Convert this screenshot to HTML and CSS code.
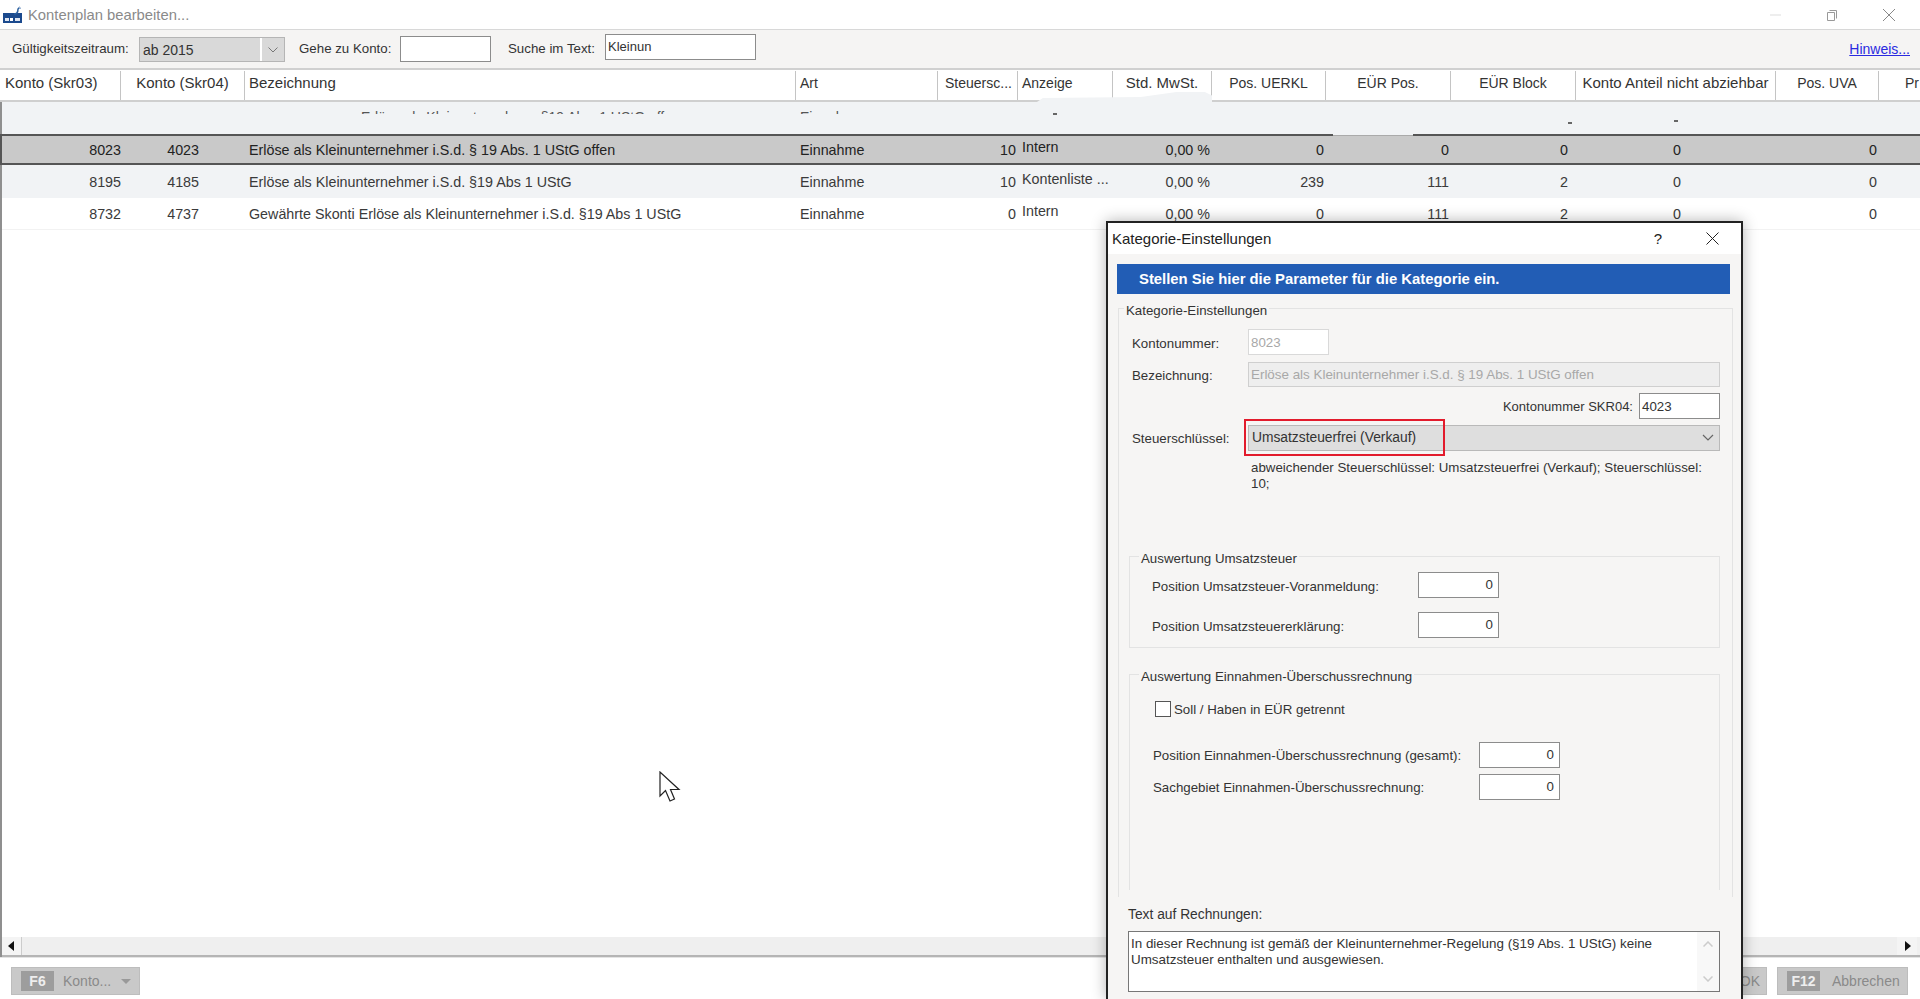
FILE: index.html
```html
<!DOCTYPE html>
<html lang="de">
<head>
  <meta charset="UTF-8">
  <title>Kontenplan bearbeiten...</title>
  <link rel="stylesheet" href="styles.css">
</head>
<body>

<div class="window">

  <!-- Titelleiste -->
  <div class="titlebar">
    <svg class="app-icon" width="20" height="17" viewBox="0 0 20 17">
      <rect x="0" y="7" width="19" height="10" fill="#1b4a8e"/>
      <rect x="2" y="12" width="4" height="3" fill="#dfe6f2"/>
      <rect x="7" y="12" width="3" height="3" fill="#fff"/>
      <rect x="12" y="12" width="5" height="3" fill="#dfe6f2"/>
      <path d="M11 8 Q15 8 15 3 L17 1" stroke="#2a5f9f" stroke-width="1.5" fill="none"/>
      <path d="M16 1 L18 3" stroke="#9fb6d6" stroke-width="1" fill="none"/>
    </svg>
    <span class="title-text">Kontenplan bearbeiten...</span>
    <div class="win-controls">
      <svg width="12" height="12" viewBox="0 0 12 12"><path d="M0 6 H11" stroke="#ddd"/></svg>
      <svg width="12" height="14" viewBox="0 0 12 14"><path d="M3.5 2.5 H10.5 V10.5 M1.5 4.5 H8.5 V12.5 H1.5 Z" stroke="#999" fill="none"/></svg>
      <svg width="14" height="14" viewBox="0 0 14 14"><path d="M1 1 L13 13 M13 1 L1 13" stroke="#888" fill="none"/></svg>
    </div>
  </div>

  <!-- Filter -->
  <div class="toolbar">
    <span class="tool-label first">Gültigkeitszeitraum:</span>
    <div class="period-combo">
      <span class="period-value">ab 2015</span>
      <span class="period-arrow">
        <svg width="10" height="6" viewBox="0 0 10 6"><path d="M0.5 0.5 L5 5 L9.5 0.5" stroke="#777" fill="none"/></svg>
      </span>
    </div>
    <span class="tool-label goto">Gehe zu Konto:</span>
    <div class="tool-input goto-input"></div>
    <span class="tool-label search">Suche im Text:</span>
    <div class="tool-input search-input">Kleinun</div>
    <a class="hint-link" href="#">Hinweis...</a>
  </div>

  <!-- Tabelle -->
  <div class="table">
    <div class="row head">
      <div class="h left first-h big">Konto (Skr03)</div>
      <div class="h big">Konto (Skr04)</div>
      <div class="h left big">Bezeichnung</div>
      <div class="h left">Art</div>
      <div class="h left steuer-h">Steuersc...</div>
      <div class="h left">Anzeige</div>
      <div class="h big">Std. MwSt.</div>
      <div class="h">Pos. UERKL</div>
      <div class="h">EÜR Pos.</div>
      <div class="h">EÜR Block</div>
      <div class="h big">Konto Anteil nicht abziehbar</div>
      <div class="h">Pos. UVA</div>
      <div class="h left pr-h">Pr</div>
    </div>

    <div class="ghost-row">
      <div class="ghost-clip">
        <span class="ghost-desc">Erlöse als Kleinunternehmer §19 Abs. 1 UStG off</span>
        <span class="ghost-art">Einnahme</span>
      </div>
      <span class="ghost-mark mark-a"></span>
      <span class="ghost-mark mark-b"></span>
      <span class="ghost-mark mark-c"></span>
    </div>

    <div class="row data selected">
      <div class="c num c1">8023</div>
      <div class="c num c2">4023</div>
      <div class="c c3">Erlöse als Kleinunternehmer i.S.d. § 19 Abs. 1 UStG offen</div>
      <div class="c c3">Einnahme</div>
      <div class="c num c5">10</div>
      <div class="c c6">Intern</div>
      <div class="c num c5">0,00 %</div>
      <div class="c num c5">0</div>
      <div class="c num c5">0</div>
      <div class="c num c5 block">0</div>
      <div class="c center">0</div>
      <div class="c num c5">0</div>
      <div class="c"></div>
    </div>
    <div class="row data alt">
      <div class="c num c1">8195</div>
      <div class="c num c2">4185</div>
      <div class="c c3">Erlöse als Kleinunternehmer i.S.d. §19 Abs 1 UStG</div>
      <div class="c c3">Einnahme</div>
      <div class="c num c5">10</div>
      <div class="c c6">Kontenliste ...</div>
      <div class="c num c5">0,00 %</div>
      <div class="c num c5">239</div>
      <div class="c num c5">111</div>
      <div class="c num c5 block">2</div>
      <div class="c center">0</div>
      <div class="c num c5">0</div>
      <div class="c"></div>
    </div>
    <div class="row data last">
      <div class="c num c1">8732</div>
      <div class="c num c2">4737</div>
      <div class="c c3">Gewährte Skonti Erlöse als Kleinunternehmer i.S.d. §19 Abs 1 UStG</div>
      <div class="c c3">Einnahme</div>
      <div class="c num c5">0</div>
      <div class="c c6">Intern</div>
      <div class="c num c5">0,00 %</div>
      <div class="c num c5">0</div>
      <div class="c num c5">111</div>
      <div class="c num c5 block">2</div>
      <div class="c center">0</div>
      <div class="c num c5">0</div>
      <div class="c"></div>
    </div>
    <div class="table-space"></div>

    <div class="hscroll">
      <div class="hs-btn left-btn"><svg width="7" height="10" viewBox="0 0 7 10"><path d="M6 0 V10 L0 5 Z" fill="#111"/></svg></div>
      <div class="hs-track"></div>
      <div class="hs-btn right-btn"><svg width="7" height="10" viewBox="0 0 7 10"><path d="M1 0 V10 L7 5 Z" fill="#111"/></svg></div>
    </div>
  </div>

  <!-- Schaltflächen unten -->
  <div class="footer">
    <div class="fbtn konto-btn">
      <span class="fkey">F6</span>
      <span class="fbtn-text">Konto...</span>
      <svg width="10" height="5" viewBox="0 0 10 5"><path d="M0 0 H10 L5 5 Z" fill="#999"/></svg>
    </div>
    <div class="footer-right">
      <div class="fbtn ok-btn"><span class="fbtn-text">OK</span></div>
      <div class="fbtn cancel-btn">
        <span class="fkey">F12</span>
        <span class="fbtn-text">Abbrechen</span>
      </div>
    </div>
  </div>
</div>

<!-- Mauszeiger -->
<svg class="cursor" width="22" height="32" viewBox="0 0 22 32">
  <path d="M1 1 V25 L6.5 19.5 L11 30 L15.5 28 L11.5 18.5 H20 Z" fill="#fff" stroke="#222" stroke-width="1.2"/>
</svg>

<!-- Dialog Kategorie-Einstellungen -->
<div class="dialog">
  <div class="dlg-title">
    <span class="dlg-title-text">Kategorie-Einstellungen</span>
    <span class="dlg-help">?</span>
    <svg class="dlg-close" width="13" height="13" viewBox="0 0 13 13"><path d="M0.5 0.5 L12.5 12.5 M12.5 0.5 L0.5 12.5" stroke="#222" fill="none"/></svg>
  </div>
  <div class="dlg-body">
    <div class="banner">Stellen Sie hier die Parameter für die Kategorie ein.</div>

    <fieldset class="main-group">
      <legend>Kategorie-Einstellungen</legend>

      <div class="form-row first-row">
        <span class="form-label">Kontonummer:</span>
        <div class="field disabled small">8023</div>
      </div>
      <div class="form-row">
        <span class="form-label">Bezeichnung:</span>
        <div class="field disabled grey wide">Erlöse als Kleinunternehmer i.S.d. § 19 Abs. 1 UStG offen</div>
      </div>
      <div class="form-row skr-row">
        <span>Kontonummer SKR04:</span>
        <div class="field small">4023</div>
      </div>
      <div class="form-row">
        <span class="form-label">Steuerschlüssel:</span>
        <div class="combo">
          <span class="combo-mark">Umsatzsteuerfrei (Verkauf)</span>
          <svg width="12" height="7" viewBox="0 0 12 7"><path d="M1 1 L6 6 L11 1" stroke="#666" stroke-width="1.2" fill="none"/></svg>
        </div>
      </div>
      <p class="note">abweichender Steuerschlüssel: Umsatzsteuerfrei (Verkauf); Steuerschlüssel: 10;</p>

      <fieldset class="sub-group ust-group">
        <legend>Auswertung Umsatzsteuer</legend>
        <div class="sub-row">
          <span class="ust-label">Position Umsatzsteuer-Voranmeldung:</span>
          <div class="field small right">0</div>
        </div>
        <div class="sub-row gap14">
          <span class="ust-label">Position Umsatzsteuererklärung:</span>
          <div class="field small right">0</div>
        </div>
      </fieldset>

      <fieldset class="sub-group eur-group">
        <legend>Auswertung Einnahmen-Überschussrechnung</legend>
        <label class="check-row"><span class="check"></span>Soll / Haben in EÜR getrennt</label>
        <div class="sub-row eur-first">
          <span class="eur-label">Position Einnahmen-Überschussrechnung (gesamt):</span>
          <div class="field small right">0</div>
        </div>
        <div class="sub-row gap6">
          <span class="eur-label">Sachgebiet Einnahmen-Überschussrechnung:</span>
          <div class="field small right">0</div>
        </div>
      </fieldset>
    </fieldset>

    <div class="invoice-label">Text auf Rechnungen:</div>
    <div class="invoice-box">
      <div class="invoice-text">In dieser Rechnung ist gemäß der Kleinunternehmer-Regelung (§19 Abs. 1 UStG) keine Umsatzsteuer enthalten und ausgewiesen.</div>
      <div class="invoice-scroll">
        <svg width="10" height="6" viewBox="0 0 10 6"><path d="M0.5 5.5 L5 1 L9.5 5.5" stroke="#ccc" stroke-width="1.5" fill="none"/></svg>
        <svg width="10" height="6" viewBox="0 0 10 6"><path d="M0.5 0.5 L5 5 L9.5 0.5" stroke="#ccc" stroke-width="1.5" fill="none"/></svg>
      </div>
    </div>
  </div>
</div>

</body>
</html>
```

FILE: styles.css
```css
* { box-sizing: border-box; }
html, body { height: 100%; }
body {
  margin: 0;
  overflow: hidden;
  background: #fff;
  color: #333;
  font-family: "Liberation Sans", Arial, sans-serif;
  font-size: 14px;
  position: relative;
}
.window {
  height: 999px;
  display: flex;
  flex-direction: column;
}

/* title bar */
.titlebar {
  height: 30px;
  display: flex;
  align-items: center;
  padding-left: 3px;
  border-bottom: 1px solid #d8d8d8;
  background: #fff;
}
.title-text { margin-left: 5px; color: #8a8a8a; font-size: 14.8px; }
.win-controls {
  margin-left: auto;
  display: flex;
  align-items: center;
  gap: 44px;
  padding-right: 24px;
}

/* toolbar */
.toolbar {
  height: 38px;
  display: flex;
  align-items: center;
  background: #f5f4f3;
  padding-bottom: 1px;
  font-size: 13.3px;
}
.tool-label { color: #333; }
.tool-label.first { margin-left: 12px; width: 127px; }
.period-combo {
  width: 146px;
  height: 25px;
  margin-top: 2px;
  display: flex;
  background: #d9d9d9;
  border: 1px solid #b5b5b5;
  font-size: 14px;
}
.period-value { flex: 1; padding: 4px 0 0 3px; }
.period-arrow {
  width: 24px;
  display: flex;
  align-items: center;
  justify-content: center;
  border-left: 2px solid #fff;
}
.tool-label.goto { margin-left: 14px; width: 101px; }
.tool-input {
  height: 26px;
  background: #fff;
  border: 1px solid #8c8c8c;
  padding: 4px 2px;
  font-size: 13px;
}
.goto-input { width: 91px; }
.tool-label.search { margin-left: 17px; width: 97px; }
.search-input { width: 151px; margin-top: -3px; }
.hint-link {
  margin-left: auto;
  margin-right: 10px;
  color: #2a2ae0;
  font-size: 14px;
}

/* table */
.table {
  flex: 1;
  display: flex;
  flex-direction: column;
  border-left: 2px solid #8f8f8f;
}
.row {
  display: grid;
  grid-template-columns: 119px 124px 551px 142px 80px 95px 99px 114px 125px 125px 200px 103px 41px;
}
.head {
  height: 34px;
  margin-left: -2px;
  position: relative;
  grid-template-columns: 121px 124px 551px 142px 80px 95px 99px 114px 125px 125px 200px 103px 41px;
  background: #fff;
  border-top: 2px solid #d0d0d0;
  border-bottom: 2px solid #cfcfcf;
}
/* Zeichenfehler der Liste: die Zeile laeuft in den Kopf hinein */
.head::after {
  content: "";
  position: absolute;
  left: 1034px;
  top: 22px;
  width: 178px;
  height: 12px;
  background: #f1f3f5;
  clip-path: polygon(0 100%, 5% 50%, 60% 42%, 80% 0, 96% 0, 100% 30%, 100% 100%);
}
.h {
  display: flex;
  align-items: center;
  justify-content: center;
  border-right: 1px solid #c4c4c4;
  margin-top: 1px;
  padding-bottom: 5px;
  color: #333;
  white-space: nowrap;
  overflow: hidden;
}
.h.big { font-size: 15px; padding-bottom: 6px; }
.h.left { justify-content: flex-start; padding-left: 4px; }
.h.first-h { padding-left: 5px; }
.h.steuer-h { padding-left: 7px; }
.h.pr-h { border-right: none; padding-left: 26px; }

.ghost-row {
  height: 32px;
  background: #f1f3f5;
  position: relative;
}
.ghost-clip {
  height: 12px;
  overflow: hidden;
  position: relative;
}
.ghost-desc { position: absolute; left: 359px; top: 7px; white-space: nowrap; color: #555; }
.ghost-art { position: absolute; left: 798px; top: 7px; color: #555; }
.ghost-mark { position: absolute; width: 4px; height: 2px; background: #666; }
.mark-a { left: 1051px; top: 11px; }
.mark-b { left: 1566px; top: 20px; }
.mark-c { left: 1672px; top: 18px; }

.data { color: #3a3a3a; white-space: nowrap; font-size: 14.3px; }
.c {
  display: flex;
  align-items: center;
  padding: 0 2px 0 4px;
  overflow: hidden;
}
.num { justify-content: flex-end; }
.center { justify-content: center; }
.c1 { padding-right: 0; }
.c2 { padding-right: 46px; }
.c6 { padding-bottom: 6px; }
.block { padding-right: 8px; }
.selected {
  height: 31px;
  position: relative;
  background: #c9c9c9;
  border-top: 2px solid #555;
  border-bottom: 2px solid #555;
  box-shadow: -2px 0 0 #555;
  color: #222;
}
.selected::before {
  content: "";
  position: absolute;
  left: 1331px;
  top: -2px;
  width: 80px;
  height: 2px;
  background: linear-gradient(#f1f3f5 50%, #aaa 50%);
}
.alt { height: 33px; padding-top: 1px; background: #f1f3f5; }
.last { height: 32px; padding-top: 1px; border-bottom: 1px solid #f2f2f2; }
.table-space { flex: 1; }

.hscroll {
  height: 20px;
  display: flex;
  border-bottom: 2px solid #b5b5b5;
  background: #f0f0f0;
}
.hs-btn {
  width: 20px;
  display: flex;
  align-items: center;
  justify-content: center;
  background: #f4f4f4;
}
.left-btn { border-right: 1px solid #ccc; }
.hs-track { flex: 1; background: #efefef; }
.right-btn { margin-right: 3px; }

/* footer */
.footer {
  height: 42px;
  display: flex;
  justify-content: space-between;
  padding: 9px 12px 0 11px;
  background: #fff;
  border-top: 1px solid #e4e4e4;
}
.fbtn {
  height: 28px;
  display: flex;
  align-items: center;
  background: #c9c9c9;
  border: 1px solid #bdbdbd;
  color: #8a8a8a;
}
.fkey {
  width: 33px;
  height: 20px;
  display: flex;
  align-items: center;
  justify-content: center;
  background: #9d9d9d;
  color: #eee;
  font-weight: bold;
}
.konto-btn { width: 129px; padding-left: 9px; }
.konto-btn .fbtn-text { margin: 0 10px 0 9px; }
.footer-right { display: flex; gap: 10px; }
.ok-btn { width: 60px; justify-content: flex-end; padding-right: 6px; }
.cancel-btn { width: 131px; padding-left: 9px; }
.cancel-btn .fbtn-text { margin-left: 12px; }

/* cursor over the list */
.cursor { position: absolute; left: 659px; top: 771px; }

/* dialog */
.dialog {
  position: absolute;
  left: 1106px;
  top: 221px;
  width: 637px;
  height: 778px;
  overflow: hidden;
  background: #f6f5f4;
  border: 2px solid #222;
  border-bottom: none;
  box-shadow: 0 0 14px rgba(0, 0, 0, 0.3);
  font-size: 13.3px;
}
.dlg-title {
  height: 31px;
  display: flex;
  align-items: center;
  background: #fff;
  padding-left: 4px;
}
.dlg-title-text { font-size: 15px; color: #222; }
.dlg-help { margin-left: auto; font-size: 15px; color: #222; }
.dlg-close { margin: 0 22px 0 44px; }

.dlg-body { padding: 10px 0 0 9px; }
.banner {
  height: 30px;
  width: 613px;
  display: flex;
  align-items: center;
  padding-left: 22px;
  background: #225db5;
  color: #fff;
  font-weight: bold;
  font-size: 14.85px;
}

fieldset { margin: 0; padding: 0; min-width: 0; }
.main-group {
  width: 615px;
  margin: 2px 0 0 1px;
  padding-bottom: 7px;
  border: 1px solid #e3e3e3;
  border-bottom: none;
}
legend { line-height: 18px; color: #333; white-space: nowrap; }
.main-group > legend { margin-left: 5px; padding: 6px 2px 0; }
.form-row {
  display: flex;
  align-items: center;
  margin: 7px 12px 0 13px;
  height: 25px;
}
.first-row { margin-top: 9px; height: 26px; }
.form-label { width: 116px; flex: none; padding-top: 2px; }
.skr-row { justify-content: flex-end; gap: 6px; margin-top: 6px; }
.skr-row span { font-size: 13px; padding-top: 2px; }
.field {
  height: 26px;
  background: #fff;
  border: 1px solid #8c8c8c;
  padding: 5px 2px 0;
  white-space: nowrap;
  overflow: hidden;
}
.small { width: 81px; }
.wide { flex: 1; height: 25px; font-size: 13.4px; padding-top: 4px; }
.disabled { border-color: #d9d9d9; color: #a8a8a8; }
.grey { background: #eeeeee; border-color: #cfcfcf; }
.right { text-align: right; padding-right: 5px; padding-top: 4px; }
.combo {
  flex: 1;
  height: 26px;
  position: relative;
  display: flex;
  align-items: center;
  justify-content: space-between;
  padding: 0 5px 0 3px;
  background: #dedede;
  border: 1px solid #b9b9b9;
  font-size: 13.8px;
}
.combo-mark::after {
  content: "";
  position: absolute;
  left: -5px;
  top: -7px;
  width: 197px;
  height: 33px;
  border: 2px solid #e21b2c;
}
.note {
  margin: 10px 14px 0 132px;
  line-height: 16px;
  color: #333;
}

.sub-group {
  width: 591px;
  margin-left: 10px;
  border: 1px solid #e3e3e3;
}
.sub-group > legend { margin-left: -13px; padding: 5px 2px 0; }
.ust-group { margin-top: 52.5px; padding: 4.5px 0 9px 22px; }
.sub-row { display: flex; align-items: center; height: 26px; }
.gap14 { margin-top: 14px; }
.gap6 { margin-top: 6px; }
.ust-label { width: 266px; padding-top: 2px; }
.eur-group {
  margin-top: 14.5px;
  padding: 15.5px 0 90px 22px;
  border-bottom: none;
}
.check-row { display: flex; align-items: center; height: 16px; padding-left: 3px; }
.check {
  width: 16px;
  height: 16px;
  margin-right: 3px;
  background: #fff;
  border: 1px solid #555;
}
.eur-first { margin-top: 25px; }
.eur-label { width: 327px; padding-left: 1px; padding-top: 1px; }

.invoice-label { margin: 9px 0 0 11px; line-height: 18px; color: #333; font-size: 13.8px; }
.invoice-box {
  width: 592px;
  height: 61px;
  margin: 7px 0 0 11px;
  display: flex;
  background: #fff;
  border: 1px solid #777;
}
.invoice-text { flex: 1; padding: 4px 10px 0 2px; line-height: 16px; font-size: 13.4px; }
.invoice-scroll {
  width: 22px;
  display: flex;
  flex-direction: column;
  align-items: center;
  justify-content: space-between;
  padding: 9px 0;
  background: #f8f8f8;
}
```
